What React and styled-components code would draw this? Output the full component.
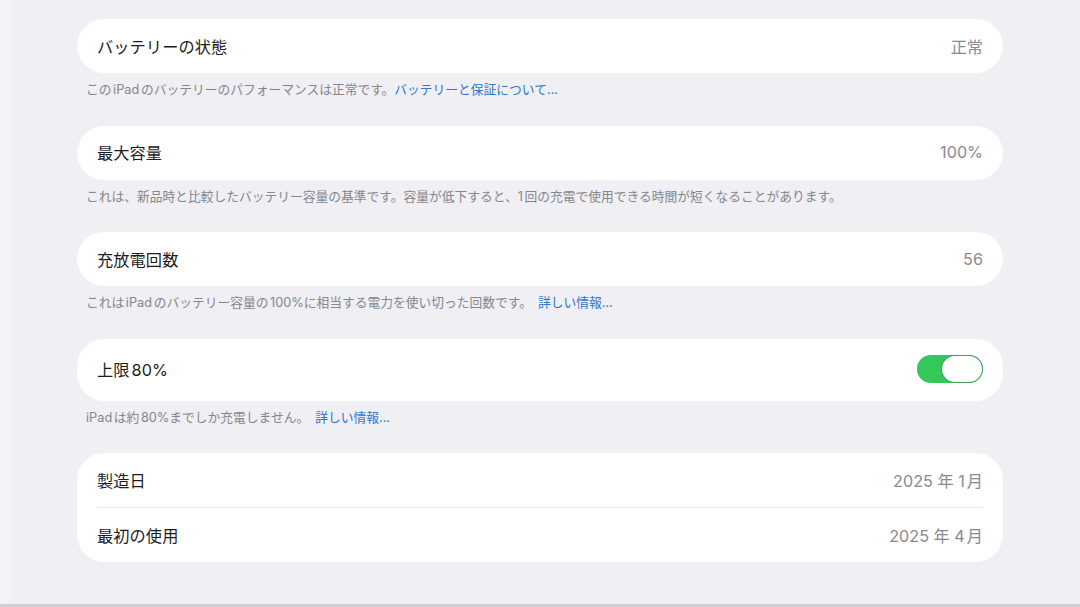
import React from "react";
import styled, { createGlobalStyle } from "styled-components";

const Global = createGlobalStyle`
  html, body { margin: 0; padding: 0; }
  body {
    background: #efeff4;
    font-family: "Inter", "Noto Sans CJK JP", "Noto Sans", sans-serif;
    -webkit-font-smoothing: antialiased;
  }
  * { box-sizing: border-box; }
`;

const Page = styled.div`
  height: 607px;
  padding: 19px 0 0 77px;
  background: linear-gradient(to right, #f5f5f8 0px, #f2f2f6 10px, #efeff4 14px);
  border-bottom: 3px solid #cfcfd4;
  overflow: hidden;
  text-autospace: normal;
`;

const Column = styled.div`
  width: 926px;
  display: flex;
  flex-direction: column;
  gap: 26.5px;
`;

const Section = styled.section`
  display: flex;
  flex-direction: column;
`;

const Card = styled.div`
  background: #ffffff;
  border-radius: 27px;
  padding: 0 20px;
  display: flex;
  flex-direction: column;
`;

const Row = styled.div`
  height: ${(p) => p.$h || 54}px;
  display: flex;
  align-items: center;
  justify-content: space-between;
  padding-bottom: 1px;
  border-top: ${(p) => (p.$divider ? "1px solid #e3e3e8" : "none")};
`;

const Label = styled.span`
  font-size: 16.2px;
  color: #1c1c1e;
  letter-spacing: 0.1px;
`;

const Value = styled.span`
  font-size: 16.2px;
  color: #8a8a8e;
`;

const Footer = styled.p`
  margin: 8px 0 0 9px;
  font-size: 12.75px;
  line-height: 18px;
  color: #86868b;
`;

const Link = styled.a`
  color: #2f78cc;
  text-decoration: none;
  margin-left: ${(p) => (p.$gap ? "6px" : "0")};
`;

const Track = styled.div`
  width: 66px;
  height: 28px;
  border-radius: 14px;
  background: #34c759;
  position: relative;
  flex-shrink: 0;
`;

const Knob = styled.div`
  position: absolute;
  right: 1px;
  top: 1px;
  width: 40px;
  height: 26px;
  border-radius: 13px;
  background: #ffffff;
  box-shadow: 0 0 0 1px rgba(80, 120, 90, 0.55);
`;

export default function App() {
  return (
    <>
      <Global />
      <Page>
        <Column>
          <Section>
            <Card>
              <Row>
                <Label>バッテリーの状態</Label>
                <Value>正常</Value>
              </Row>
            </Card>
            <Footer>
              このiPadのバッテリーのパフォーマンスは正常です。
              <Link>バッテリーと保証について...</Link>
            </Footer>
          </Section>
          <Section>
            <Card>
              <Row>
                <Label>最大容量</Label>
                <Value>100%</Value>
              </Row>
            </Card>
            <Footer>
              これは、新品時と比較したバッテリー容量の基準です。容量が低下すると、1回の充電で使用できる時間が短くなることがあります。
            </Footer>
          </Section>
          <Section>
            <Card>
              <Row>
                <Label>充放電回数</Label>
                <Value>56</Value>
              </Row>
            </Card>
            <Footer>
              これはiPadのバッテリー容量の100%に相当する電力を使い切った回数です。
              <Link $gap>詳しい情報...</Link>
            </Footer>
          </Section>
          <Section>
            <Card>
              <Row $h={62}>
                <Label>上限80%</Label>
                <Track>
                  <Knob />
                </Track>
              </Row>
            </Card>
            <Footer>
              iPadは約80%までしか充電しません。
              <Link $gap>詳しい情報...</Link>
            </Footer>
          </Section>
          <Section>
            <Card>
              <Row>
                <Label>製造日</Label>
                <Value>2025 年 1月</Value>
              </Row>
              <Row $divider $h={55}>
                <Label>最初の使用</Label>
                <Value>2025 年 4月</Value>
              </Row>
            </Card>
          </Section>
        </Column>
      </Page>
    </>
  );
}
